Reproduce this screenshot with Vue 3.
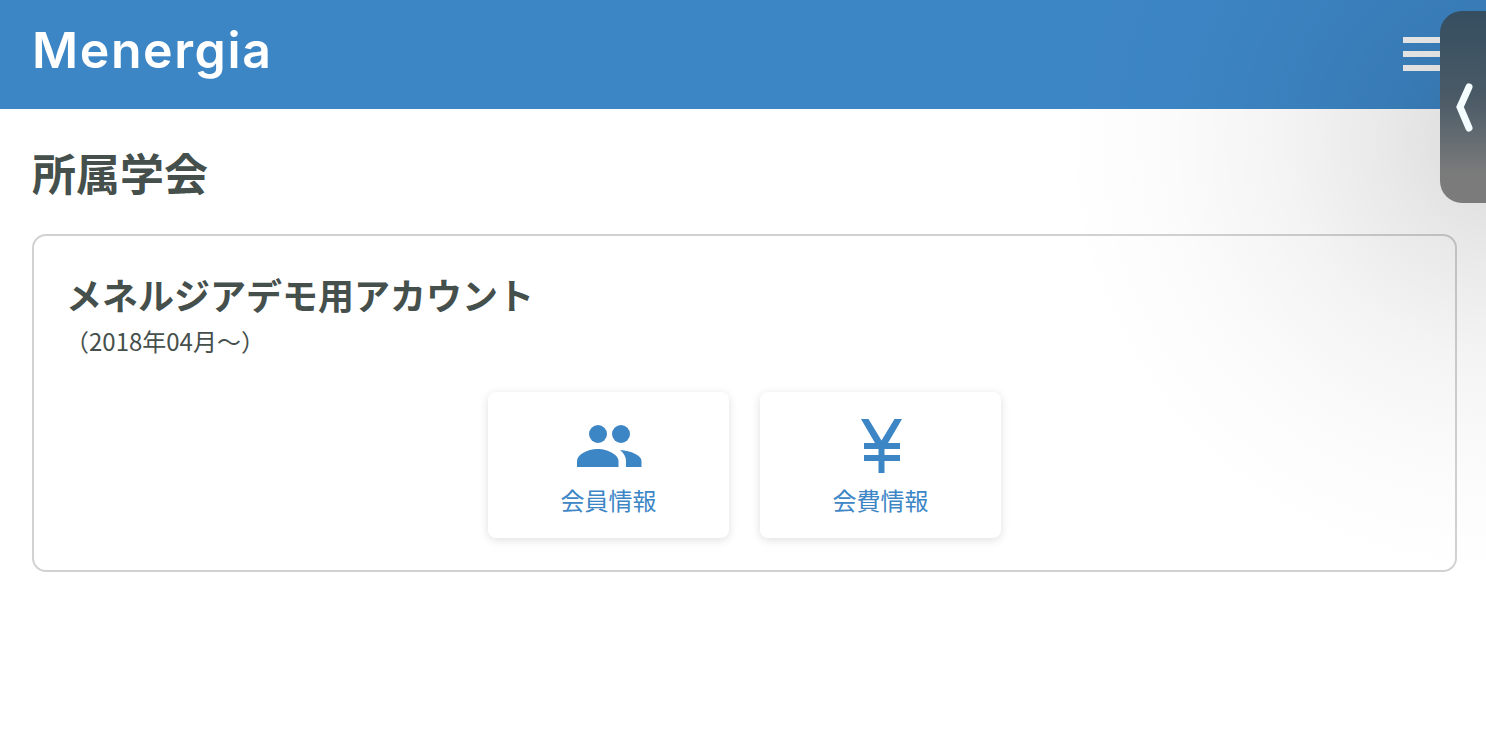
<script setup>
const actions = [
  { label: '会員情報', icon: 'members' },
  { label: '会費情報', icon: 'fee' },
]
</script>

<template>
  <div class="page">
    <header class="topbar">
      <div class="logo">Menergia</div>
      <div class="burger">
        <span></span>
        <span></span>
        <span></span>
      </div>
    </header>

    <main class="content">
      <h1 class="title">所属学会</h1>
      <section class="society">
        <h2 class="society-name">メネルジアデモ用アカウント</h2>
        <p class="society-since">（2018年04月〜）</p>
        <div class="actions">
          <a v-for="item in actions" :key="item.label" class="action">
            <svg class="action-icon" viewBox="0 0 70 60" aria-hidden="true">
              <template v-if="item.icon === 'members'">
                <circle cx="24" cy="21" r="9" />
                <circle cx="47" cy="21" r="9" />
                <path d="M3 54v-6c0-6 10-12 20.5-12s21 6 21 12v6z" />
                <path d="M46 37c11 1 21.5 5 21.5 11v6H52v-6c0-4-2-8-6-11z" />
              </template>
              <template v-else>
                <path d="M15 6h7.5l13 21.5L48.5 6H56L42 30h12v6H38.5v6H54v6H38.5v12h-6V48H18v-6h14.5v-6H18v-6h11z" />
              </template>
            </svg>
            <span class="action-label">{{ item.label }}</span>
          </a>
        </div>
      </section>
    </main>

    <div class="shade"></div>

    <div class="drawer-handle">
      <svg width="46" height="192" viewBox="0 0 46 192" aria-hidden="true">
        <path d="M29 76 20 96l9 21" fill="none" stroke="#f4fdff" stroke-width="7" stroke-linecap="round" stroke-linejoin="miter" />
      </svg>
    </div>
  </div>
</template>

<style scoped>
.page {
  position: relative;
  width: 1486px;
  height: 737px;
  overflow: hidden;
  background: #fff;
  color: #454f4c;
  font-family: "Noto Sans CJK JP", "Noto Sans", sans-serif;
}
.topbar {
  height: 109px;
  display: flex;
  align-items: center;
  justify-content: space-between;
  padding: 0 44px 0 32px;
  background: #3d86c6;
}
.logo {
  font-family: "Inter", sans-serif;
  font-size: 50px;
  font-weight: 600;
  line-height: 1;
  letter-spacing: 1.6px;
  color: #fff;
  margin-top: -9px;
}
.burger {
  width: 39px;
  display: flex;
  flex-direction: column;
  gap: 8px;
  margin-top: -1px;
}
.burger span {
  height: 6px;
  background: #f7f7f7;
}
.content {
  padding: 31px 29px 0 32px;
}
.title {
  margin: 0;
  font-size: 44px;
  font-weight: 700;
  line-height: 64px;
}
.society {
  margin-top: 30px;
  height: 338px;
  box-sizing: border-box;
  border: 2px solid #d2d2d2;
  border-radius: 14px;
  padding: 32px 32px 0;
}
.society-name {
  margin: 0;
  font-size: 36px;
  font-weight: 700;
  line-height: 52px;
}
.society-since {
  margin: 3px 0 0 -1px;
  font-size: 24px;
  line-height: 36px;
}
.actions {
  display: flex;
  justify-content: center;
  gap: 31px;
  margin-top: 33px;
}
.action {
  width: 241px;
  height: 146px;
  display: flex;
  flex-direction: column;
  align-items: center;
  background: #fff;
  border-radius: 8px;
  box-shadow: 0 2px 10px rgba(0, 0, 0, 0.13);
  color: #3d86c6;
}
.action-icon {
  width: 70px;
  height: 60px;
  margin-top: 21px;
  margin-left: 1px;
  fill: #3d86c6;
}
.action-label {
  margin-top: 9px;
  font-size: 24px;
  line-height: 36px;
}
.shade {
  position: absolute;
  inset: 0;
  pointer-events: none;
  background: radial-gradient(circle 440px at 1500px 140px, rgba(0, 0, 0, 0.15), rgba(0, 0, 0, 0.09) 25%, rgba(0, 0, 0, 0.045) 50%, rgba(0, 0, 0, 0.015) 75%, rgba(0, 0, 0, 0) 100%);
}
.drawer-handle {
  position: absolute;
  top: 11px;
  right: 0;
  width: 46px;
  height: 192px;
  border-radius: 22px 0 0 22px;
  background: linear-gradient(180deg, #354e60 0%, #4a5a66 45%, #7b7b7b 85%, #7b7b7b 100%);
}
</style>
